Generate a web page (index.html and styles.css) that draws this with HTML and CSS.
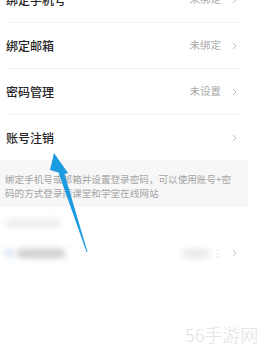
FILE: index.html
```html
<!DOCTYPE html>
<html lang="zh">
<head>
<meta charset="utf-8">
<link rel="stylesheet" href="styles.css">
</head>
<body>
<div class="page">
  <div class="list">
    <div class="row"><span class="label">绑定手机号</span><span class="value">未绑定</span><svg class="chev" width="5" height="8" viewBox="0 0 5 8"><path d="M1 1l3 3-3 3" fill="none" stroke="#bdbdbd" stroke-width="1"/></svg></div>
    <div class="sep"></div>
    <div class="row"><span class="label">绑定邮箱</span><span class="value">未绑定</span><svg class="chev" width="5" height="8" viewBox="0 0 5 8"><path d="M1 1l3 3-3 3" fill="none" stroke="#bdbdbd" stroke-width="1"/></svg></div>
    <div class="sep"></div>
    <div class="row"><span class="label">密码管理</span><span class="value">未设置</span><svg class="chev" width="5" height="8" viewBox="0 0 5 8"><path d="M1 1l3 3-3 3" fill="none" stroke="#bdbdbd" stroke-width="1"/></svg></div>
    <div class="sep"></div>
    <div class="row"><span class="label">账号注销</span><svg class="chev" width="5" height="8" viewBox="0 0 5 8"><path d="M1 1l3 3-3 3" fill="none" stroke="#bdbdbd" stroke-width="1"/></svg></div>
  </div>
  <div class="note">绑定手机号或邮箱并设置登录密码，可以使用账号+密码的方式登录雨课堂和学堂在线网站</div>
  <div class="blurred">
    <div class="brow1"><span class="bl bl-light"></span></div>
    <div class="brow2">
      <span class="bl bl-blue"></span><span class="bl bl-dark"></span>
      <span class="spacer"></span>
      <span class="bl bl-right"></span><span class="dots">⋮</span>
      <svg class="chev" width="5" height="8" viewBox="0 0 5 8"><path d="M1 1l3 3-3 3" fill="none" stroke="#c4c4c4" stroke-width="1"/></svg>
    </div>
  </div>
</div>
<svg class="arrow" width="265" height="349" viewBox="0 0 265 349"><polygon points="54,153 68,173 64.5,174 87.5,252 86.5,252 58.5,172.5 50,170" fill="#1b9be0"/></svg>
<div class="mark">56手游网</div>
</body>
</html>
```
FILE: styles.css
```css
html, body {
  margin: 0;
  padding: 0;
  background: #fff;
  width: 265px;
  height: 349px;
  overflow: hidden;
  font-family: "Noto Sans CJK SC", "Noto Sans", sans-serif;
}
.page {
  width: 248px;
  position: relative;
}
.list {
  margin-top: -23px;
}
.row {
  height: 45px;
  display: flex;
  align-items: center;
  padding: 0 11px 0 6px;
}
.label {
  font-size: 12px;
  color: #262626;
  flex: 1;
  line-height: 1;
  font-weight: 500;
}
.value {
  font-size: 10.5px;
  color: #a9a9a9;
  margin-right: 11px;
  line-height: 1;
}
.chev {
  display: block;
}
.sep {
  height: 1px;
  margin: 0 8px;
  background: #f2f2f2;
}
.note {
  background: #f7f7f7;
  padding: 12px 12px 7px 5px;
  font-size: 9.6px;
  line-height: 14px;
  color: #a3a3a3;
  height: 28px;
}
.blurred {
  padding-top: 10px;
}
.brow1 {
  height: 12px;
  display: flex;
  align-items: center;
  padding-left: 6px;
}
.brow2 {
  margin-top: 18px;
  height: 12px;
  display: flex;
  align-items: center;
  padding: 0 11px 0 4px;
}
.bl {
  display: block;
  filter: blur(3px);
  border-radius: 4px;
}
.bl-light {
  width: 55px;
  height: 8px;
  background: #ebebeb;
}
.bl-blue {
  width: 10px;
  height: 8px;
  background: #d6e5f3;
}
.bl-dark {
  width: 48px;
  height: 9px;
  background: #cdcdcd;
  margin-left: 3px;
}
.spacer {
  flex: 1;
}
.bl-right {
  width: 26px;
  height: 9px;
  background: #e8e8e8;
}
.dots {
  font-size: 9px;
  color: #cfcfcf;
  margin: 0 10px 0 4px;
  line-height: 1;
}
.arrow {
  position: absolute;
  left: 0;
  top: 0;
}
.mark {
  position: absolute;
  left: 185px;
  top: 322px;
  font-size: 18px;
  line-height: 24px;
  color: #e2e2e2;
  font-family: "Noto Sans CJK SC", sans-serif;
  font-weight: 300;
  white-space: nowrap;
}
```
